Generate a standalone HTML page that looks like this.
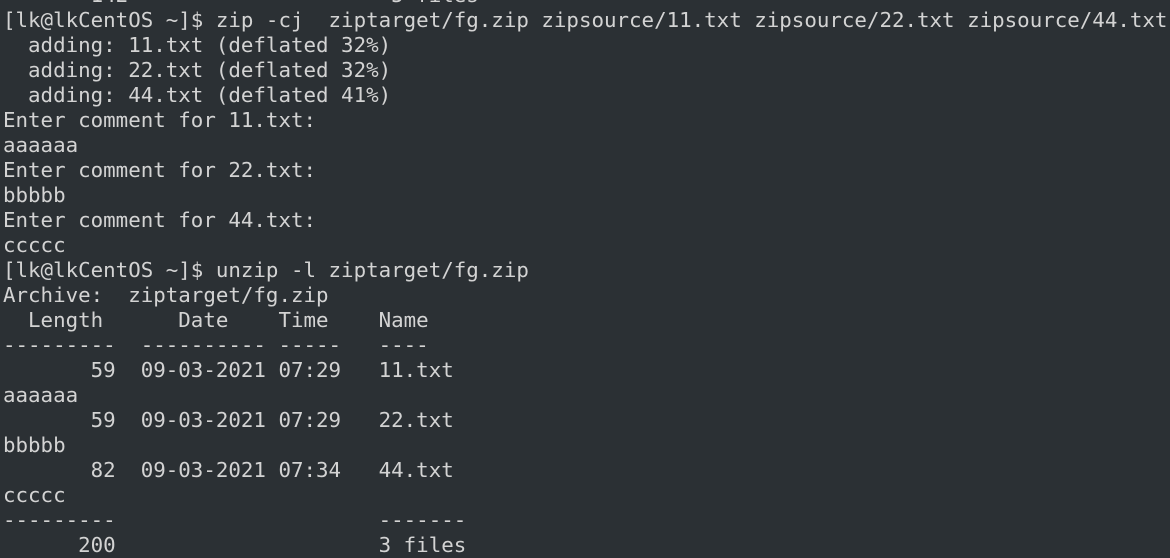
<!DOCTYPE html>
<html><head><meta charset="utf-8"><style>
html,body{margin:0;padding:0;background:#2b3034;width:1170px;height:558px;overflow:hidden}
pre{position:absolute;left:3px;top:-17px;margin:0;font-family:"DejaVu Sans Mono","Liberation Mono",monospace;font-size:20.8px;line-height:25px;color:#d3d3d3;letter-spacing:0}
</style></head><body><pre>       142                     5 files
[lk@lkCentOS ~]$ zip -cj  ziptarget/fg.zip zipsource/11.txt zipsource/22.txt zipsource/44.txt
  adding: 11.txt (deflated 32%)
  adding: 22.txt (deflated 32%)
  adding: 44.txt (deflated 41%)
Enter comment for 11.txt:
aaaaaa
Enter comment for 22.txt:
bbbbb
Enter comment for 44.txt:
ccccc
[lk@lkCentOS ~]$ unzip -l ziptarget/fg.zip
Archive:  ziptarget/fg.zip
  Length      Date    Time    Name
---------  ---------- -----   ----
       59  09-03-2021 07:29   11.txt
aaaaaa
       59  09-03-2021 07:29   22.txt
bbbbb
       82  09-03-2021 07:34   44.txt
ccccc
---------                     -------
      200                     3 files
</pre></body></html>
